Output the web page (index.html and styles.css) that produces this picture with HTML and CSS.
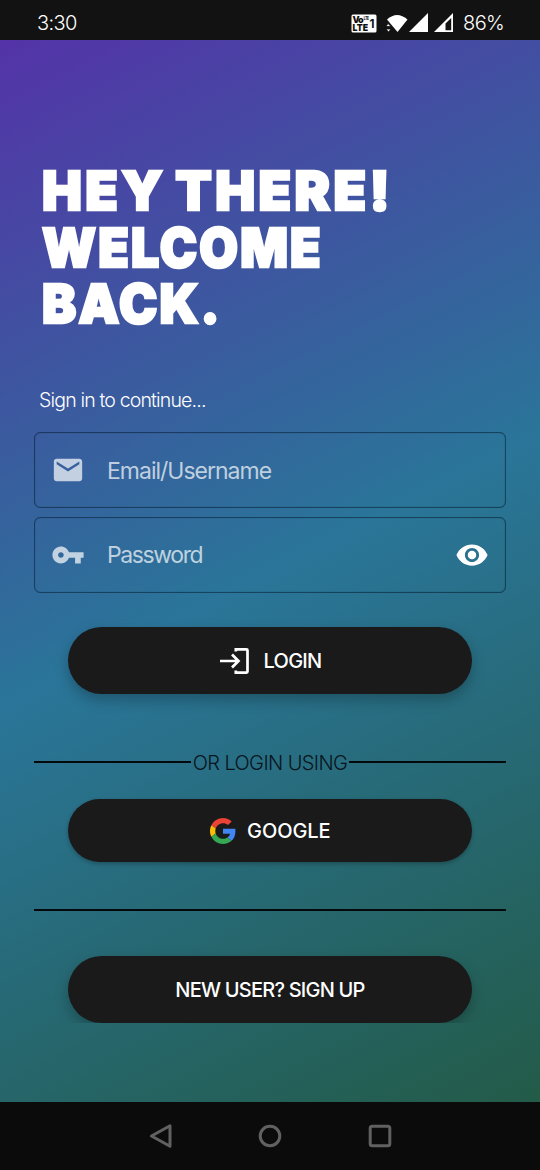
FILE: index.html
```html
<!DOCTYPE html>
<html lang="en">
<head>
<meta charset="utf-8">
<title>Login</title>
<link rel="stylesheet" href="styles.css">
</head>
<body>
<header class="status">
  <span class="clock">3:30</span>
  <div class="indicators">
    <svg class="volte" width="26" height="19" viewBox="0 0 26 19"><rect x=".5" y=".5" width="25" height="18" rx="1.5" fill="#fff"/><g fill="#111" font-family="Inter, sans-serif" font-weight="900"><text x="1.5" y="8.800" font-size="9" textLength="11">Vo</text><text x="12.800" y="5.500" font-size="5" textLength="5" lengthAdjust="spacingAndGlyphs">LTE</text><text x="1.500" y="17" font-size="9" textLength="15.500" lengthAdjust="spacingAndGlyphs">LTE</text><text x="18.500" y="14" font-size="12" font-weight="700" textLength="5" lengthAdjust="spacingAndGlyphs">1</text></g></svg>
    <svg class="wifi" width="22" height="19" viewBox="0 0 22 19"><path d="M1 5.500Q11-3.500 21.500 5.500L11.500 18Z" fill="#fff"/><path d="M0 12.500l2-3 3 3zM0 15l2.500 3 2.500-3z" fill="#fff" stroke="#121212" stroke-width=".8"/></svg>
    <svg class="signal" width="20" height="20" viewBox="0 0 20 20"><path d="M19 0V19H0Z" fill="#fff"/></svg>
    <svg class="signal2" width="20" height="20" viewBox="0 0 20 20"><path fill-rule="evenodd" d="M19 0V19H0ZM17.200 5L11.500 10.500V17.200H17.200Z" fill="#fff"/></svg>
    <span class="battery">86%</span>
  </div>
</header>
<main class="screen">
  <h1 class="title"><span class="line l1">HEY THERE!</span><span class="line l2">WELCOME</span><span class="line l3">BACK.</span></h1>
  <p class="hint">Sign in to continue...</p>
  <div class="field">
    <svg class="lead" width="34" height="34" viewBox="0 0 24 24"><path d="M20 4H4c-1.100 0-1.990.9-1.990 2L2 18c0 1.100.9 2 2 2h16c1.100 0 2-.9 2-2V6c0-1.100-.9-2-2-2zm0 4l-8 5-8-5V6l8 5 8-5v2z"/></svg>
    <span class="label email">Email/Username</span>
  </div>
  <div class="field">
    <svg class="lead" width="34" height="34" viewBox="0 0 24 24"><path d="M12.650 10C11.830 7.670 9.610 6 7 6c-3.310 0-6 2.690-6 6s2.690 6 6 6c2.610 0 4.830-1.670 5.650-4H17v4h4v-4h2v-4H12.650zM7 14c-1.100 0-2-.9-2-2s.9-2 2-2 2 .9 2 2-.9 2-2 2z"/></svg>
    <span class="label password">Password</span>
    <svg class="eye" width="34" height="34" viewBox="0 0 24 24"><path d="M12 4.500C7 4.500 2.730 7.610 1 12c1.730 4.390 6 7.500 11 7.500s9.270-3.110 11-7.500c-1.730-4.390-6-7.500-11-7.500zM12 17c-2.760 0-5-2.240-5-5s2.240-5 5-5 5 2.240 5 5-2.240 5-5 5zm0-8c-1.660 0-3 1.340-3 3s1.340 3 3 3 3-1.340 3-3-1.340-3-3-3z"/></svg>
  </div>
  <button class="pill login">
    <svg width="30" height="28" viewBox="0 0 30 28" fill="none" stroke="#fff" stroke-width="2.700"><path d="M14.500 2.400H26.500Q27.500 2.400 27.500 3.400V24.600Q27.500 25.600 26.500 25.600H14.500M15.800 2V4.500M15.800 26V23.500"/><path d="M0 14H19M12 7.500L18.500 14L12 20.500"/></svg>
    <span class="t-login">LOGIN</span>
  </button>
  <div class="divider"><span class="t-or">OR LOGIN USING</span></div>
  <button class="pill google">
    <svg width="26" height="26" viewBox="0 0 48 48"><path fill="#EA4335" d="M24 9.500c3.540 0 6.710 1.220 9.210 3.600l6.850-6.850C35.900 2.380 30.470 0 24 0 14.620 0 6.510 5.380 2.560 13.220l7.980 6.190C12.430 13.720 17.740 9.500 24 9.500z"/><path fill="#4285F4" d="M46.980 24.550c0-1.570-.15-3.090-.38-4.550H24v9.020h12.940c-.58 2.960-2.260 5.480-4.780 7.180l7.730 6c4.510-4.180 7.090-10.360 7.090-17.650z"/><path fill="#FBBC05" d="M10.530 28.590c-.48-1.450-.76-2.990-.76-4.590s.27-3.140.76-4.590l-7.980-6.190C.92 16.460 0 20.120 0 24s.92 7.540 2.560 10.780l7.970-6.190z"/><path fill="#34A853" d="M24 48c6.480 0 11.930-2.130 15.890-5.810l-7.730-6c-2.150 1.450-4.920 2.300-8.160 2.300-6.260 0-11.570-4.220-13.470-9.910l-7.980 6.190C6.510 42.620 14.620 48 24 48z"/></svg>
    <span class="t-google">GOOGLE</span>
  </button>
  <div class="rule"></div>
  <div class="clip"><button class="pill signup"><span class="t-signup">NEW USER? SIGN UP</span></button></div>
</main>
<nav class="navbar">
  <svg width="24" height="24" viewBox="0 0 24 24"><path d="M22 1.800V22.200L3.500 12Z"/></svg>
  <svg width="24" height="24" viewBox="0 0 24 24"><circle cx="12" cy="12" r="9.800"/></svg>
  <svg width="24" height="24" viewBox="0 0 24 24"><rect x="2.200" y="2.200" width="19.600" height="19.600" rx="2"/></svg>
</nav>
</body>
</html>
```
FILE: styles.css
```css
* { box-sizing: border-box; }
body {
  margin: 0;
  width: 540px;
  height: 1170px;
  display: flex;
  flex-direction: column;
  overflow: hidden;
  font-family: Inter, "Liberation Sans", sans-serif;
  color: #fff;
}
svg { display: block; flex: none; }
.status {
  height: 40px;
  flex: none;
  background: #121212;
  display: flex;
  justify-content: space-between;
  align-items: center;
  padding: 6px 36px 0 37px;
  font-size: 20px;
  font-weight: 300;
}
.clock { letter-spacing: -0.6px; }
.indicators { display: flex; align-items: center; }
.wifi { margin-left: 9px; }
.signal { margin-left: 1px; }
.signal2 { margin-left: 5px; }
.battery { margin-left: 9px; width: 41px; letter-spacing: -0.6px; white-space: nowrap; }
.screen {
  height: 1062px;
  flex: none;
  padding: 123px 34px 0;
  background: linear-gradient(153deg, #5433a8 0%, #2a7599 50%, #235b48 100%);
}
.title {
  margin: 0 0 0 8px;
  font-size: 54px;
  line-height: 56.5px;
  font-weight: 900;
  -webkit-text-stroke: 2.5px #fff;
}
.line { display: block; white-space: nowrap; transform-origin: 0 50%; }
.l1 { letter-spacing: 3.5px; word-spacing: -5px; transform: scaleX(.985); }
.l2 { letter-spacing: 2.3px; transform: scaleX(.925); }
.l3 { letter-spacing: 2.3px; transform: scaleX(.95); }
.hint {
  margin: 55px 0 19.5px 5px;
  font-size: 19.5px;
  line-height: 25px;
  font-weight: 300;
  letter-spacing: -0.83px;
}
.field {
  height: 76px;
  margin-bottom: 8.5px;
  padding: 0 16px;
  border: 1px solid rgba(5, 28, 48, .55);
  box-shadow: inset 0 0 1px rgba(5, 28, 48, .5);
  border-radius: 6px;
  display: flex;
  align-items: center;
}
.lead { fill: rgba(255, 255, 255, .7); margin-right: 22px; }
.label { font-size: 23px; color: rgba(255, 255, 255, .7); letter-spacing: -1px; padding-top: 1px; }
.password { letter-spacing: -1.4px; }
.eye { fill: #fff; margin-left: auto; }
.pill {
  width: 404px;
  height: 67px;
  margin: 0 auto;
  padding: 1px 0 0;
  border: 0;
  border-radius: 34px;
  background: #1a1a1a;
  color: #fff;
  font: 500 20px Inter, sans-serif;
  display: flex;
  align-items: center;
  justify-content: center;
  box-shadow: 0 6px 14px rgba(0, 0, 0, .25);
}
.login { margin-top: 34px; padding-left: 1px; gap: 14px; }
.pill.google { height: 63px; gap: 11.5px; box-shadow: 0 2px 4px rgba(0, 0, 0, .25); }
.t-login { letter-spacing: -0.75px; }
.t-google { letter-spacing: -0.1px; }
.t-signup { letter-spacing: -0.78px; }
.divider {
  display: flex;
  align-items: center;
  height: 30px;
  margin: 53.5px 0 21.5px;
  gap: 2px;
  color: #07141c;
  font-size: 20px;
  font-weight: 300;
  white-space: nowrap;
}
.divider::before, .divider::after { content: ""; flex: 1; height: 2px; background: #05090c; }
.t-or { letter-spacing: -0.6px; padding-top: 1px; }
.rule { height: 2px; margin: 47px 0 25px; background: #05090c; }
.clip { height: 87.5px; padding-top: 20px; overflow: hidden; }
.navbar {
  height: 68px;
  flex: none;
  background: #0b0b0b;
  display: flex;
  justify-content: center;
  align-items: center;
  gap: 86px;
}
.navbar svg { fill: none; stroke: #616161; stroke-width: 3; stroke-linejoin: round; }
```
